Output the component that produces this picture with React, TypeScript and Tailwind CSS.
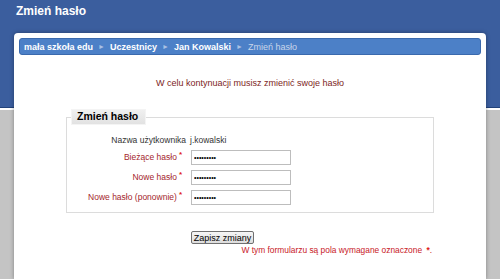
import React from 'react';

const rows = [
  { label: 'Bieżące hasło', value: 'abcdefghi' },
  { label: 'Nowe hasło', value: 'abcdefghi' },
  { label: 'Nowe hasło (ponownie)', value: 'abcdefghi' },
];

const Crumbs = ['mała szkoła edu', 'Uczestnicy', 'Jan Kowalski'];

export default function App() {
  return (
    <div className="w-[500px] h-[279px] overflow-hidden flex flex-col font-['Liberation_Sans',Arial,sans-serif] bg-[linear-gradient(to_bottom,#3b5e9e_0,#3b5e9e_107px,#22427a_107px,#22427a_108px,#ffffff_108px,#ffffff_110px,#c4c4c4_110px,#c4c4c4_100%)]">
      {/* Page heading */}
      <div className="h-[33px] pt-[4px] pl-[16px]">
        <h1 className="text-[12px] leading-[14px] font-bold text-white">Zmień hasło</h1>
      </div>

      {/* Main panel */}
      <div className="mx-[14px] flex-1 bg-white rounded-t-[4px] px-[5px] pt-[5px] shadow-[0_0_4px_rgba(0,0,0,0.35)]">
        {/* Breadcrumb */}
        <div className="h-[17px] flex items-center pl-[4px] rounded-[3px] border border-[#3a69ad] bg-[#4c80c7] text-[9px] leading-[10px]">
          {Crumbs.map((c) => (
            <React.Fragment key={c}>
              <span className="font-bold text-white">{c}</span>
              <span className="mx-[5px] text-[7px] text-[#a9c1e4]">►</span>
            </React.Fragment>
          ))}
          <span className="text-[#c9d6ea]">Zmień hasło</span>
        </div>

        {/* Notice */}
        <p className="mt-[23px] text-center text-[9px] leading-[11px] text-[#7d1d1d]">
          W celu kontynuacji musisz zmienić swoje hasło
        </p>

        {/* Form */}
        <div className="w-[368px] mx-auto mt-[20px]">
          <fieldset className="border border-[#dcdcdc] pb-[7px]">
            <legend className="ml-[4px] w-[75px] h-[16px] pl-[5px] flex items-center text-[10.5px] font-bold text-black bg-[linear-gradient(to_bottom,#f0f0f0,#e2e2e2)] border border-[#f4f4f4]">
              Zmień hasło
            </legend>
            <div className="grid grid-cols-[119px_1fr] gap-x-[4px] pt-[9px] text-[8.5px]">
              <div className="h-[12px] flex items-center justify-end text-[#333]">Nazwa użytkownika</div>
              <div className="h-[12px] flex items-center text-[#333]">j.kowalski</div>
              {rows.map((r, i) => (
                <React.Fragment key={r.label}>
                  <div
                    className={`${i === 0 ? 'mt-[4px]' : 'mt-[5px]'} h-[15px] flex items-center justify-end pr-[4px] text-[#a4262c]`}
                  >
                    {r.label}
                    <span className="ml-[2px] -mt-[5px] text-[8px] font-bold text-[#e01b1b]">*</span>
                  </div>
                  <div className={`${i === 0 ? 'mt-[4px]' : 'mt-[5px]'} h-[15px] pl-[1px]`}>
                    <input
                      type="password"
                      readOnly
                      defaultValue={r.value}
                      className="block w-[100px] h-[15px] px-[2px] border border-[#bdbdbd] bg-white text-[7px] text-black outline-none"
                    />
                  </div>
                </React.Fragment>
              ))}
            </div>
          </fieldset>

          {/* Submit */}
          <div className="mt-[18px] pl-[125px]">
            <button className="h-[13px] w-[63px] flex items-center justify-center rounded-[2px] border border-[#707070] bg-[linear-gradient(to_bottom,#f6f6f6,#dcdcdc)] text-[9px] leading-[10px] text-black">
              Zapisz zmiany
            </button>
          </div>
          <p className="mt-[1px] pr-[2px] text-right text-[8.4px] leading-[11px] text-[#c8201f]">
            W tym formularzu są pola wymagane oznaczone <span className="ml-[2px] font-bold text-[#e01b1b]">*</span>.
          </p>
        </div>
      </div>
    </div>
  );
}
